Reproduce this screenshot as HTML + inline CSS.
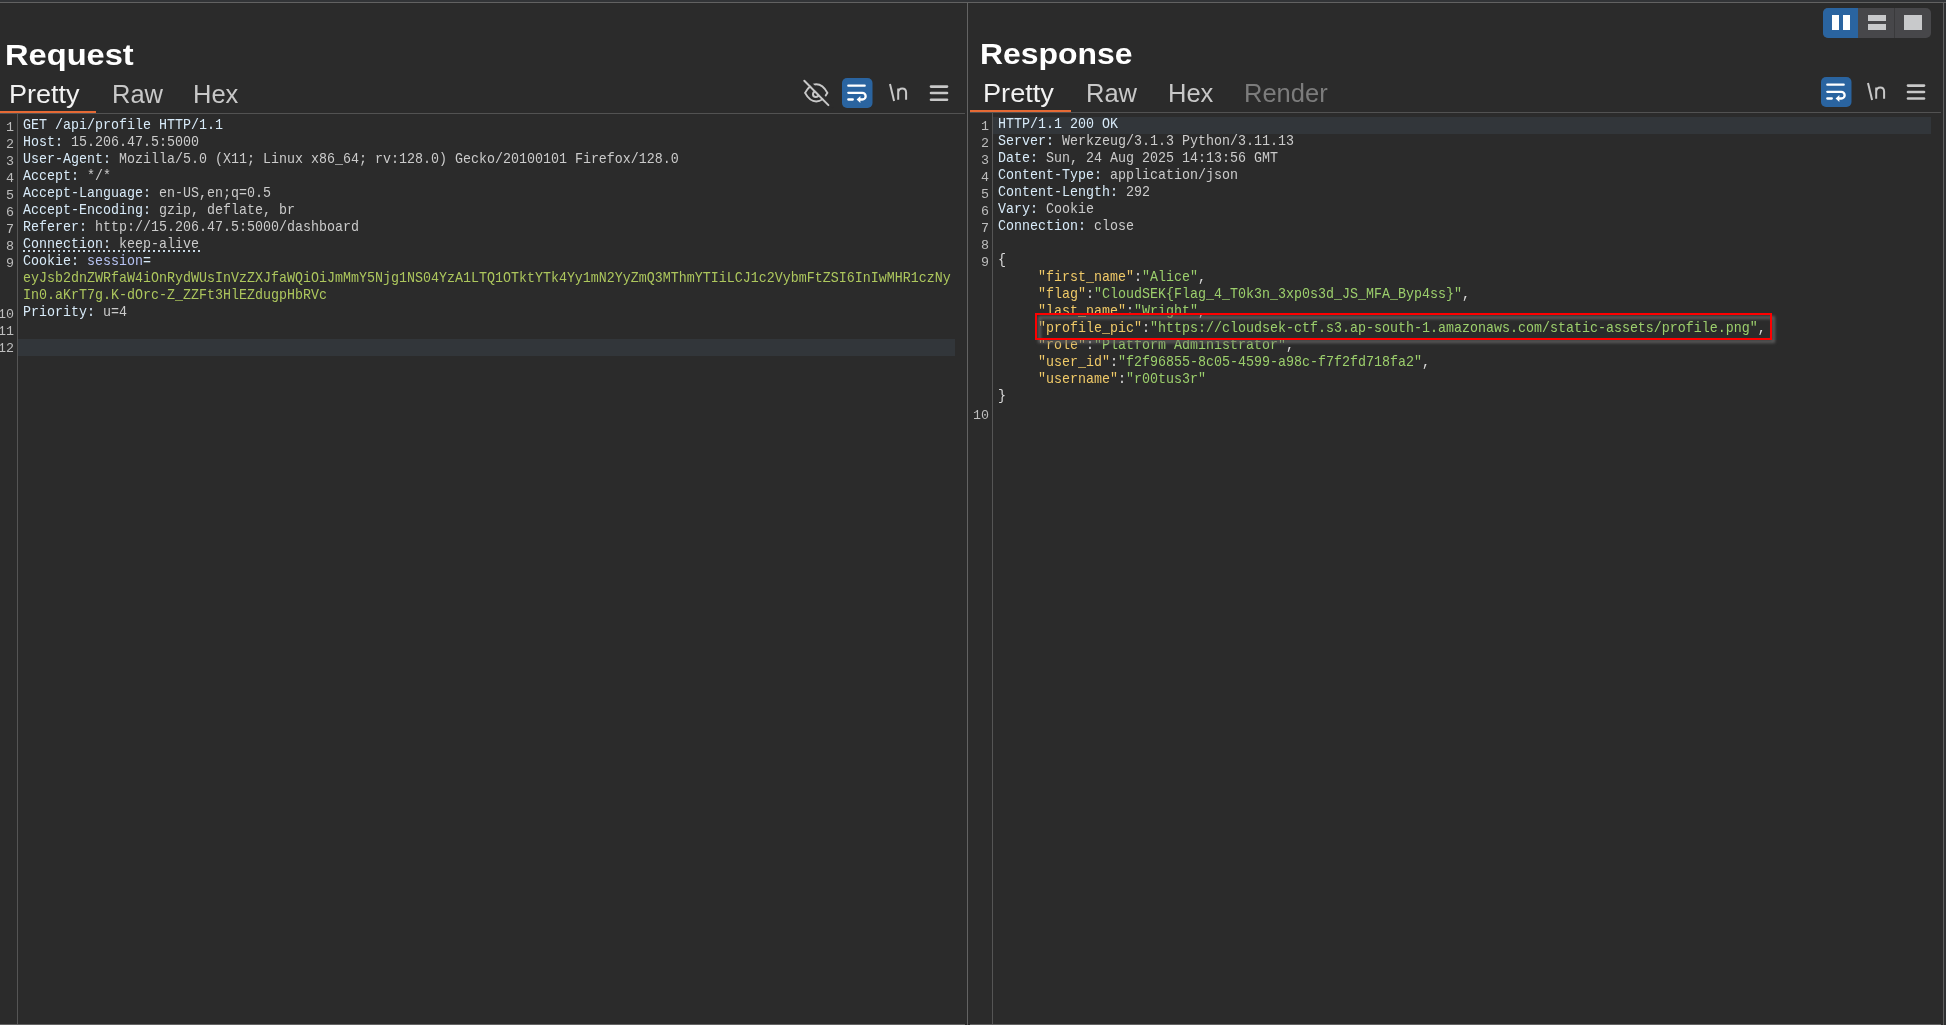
<!DOCTYPE html>
<html><head><meta charset="utf-8">
<style>
html,body{margin:0;padding:0;}
body{width:1946px;height:1025px;overflow:hidden;background:#2b2b2b;position:relative;font-family:"Liberation Sans",sans-serif;}
.a{position:absolute;}
.hl{position:absolute;background:#636363;}
.h1{position:absolute;will-change:transform;font-family:"Liberation Sans",sans-serif;font-weight:bold;font-size:29px;line-height:34px;color:#fff;white-space:pre;transform-origin:0 0;}
.tab{position:absolute;will-change:transform;font-family:"Liberation Sans",sans-serif;font-size:25.5px;line-height:30px;color:#c8c8c8;white-space:pre;}
.code{position:absolute;will-change:transform;transform:scaleY(1.08);transform-origin:0 12px;font-family:"Liberation Mono",monospace;font-size:13.333px;line-height:17px;white-space:pre;color:#c4beb6;}
.ln{position:absolute;will-change:transform;font-family:"Liberation Mono",monospace;font-size:13.333px;line-height:17px;white-space:pre;color:#bdbdbd;text-align:right;}
.n{color:#d8ebf9;}
.v{color:#cbcbcb;}
.ck{color:#b6c2f2;}
.cv{color:#adc75d;}
.k{color:#f0ca68;}
.s{color:#9ccf6c;}
.p{color:#dcdcdc;}
</style></head>
<body>
<!-- right edge strip -->
<div class="a" style="left:1944px;top:0;width:2px;height:1025px;background:#2f3032"></div>
<div class="hl" style="left:1943px;top:2px;width:1px;height:1023px;background:#5e5e5e"></div>
<!-- top strip -->
<div class="a" style="left:0;top:0;width:1946px;height:2px;background:#323437"></div>
<div class="hl" style="left:0;top:2px;width:1946px;height:1px;background:#626262"></div>
<!-- divider -->
<div class="hl" style="left:967px;top:2px;width:1px;height:1023px"></div>
<!-- bottom lines -->
<div class="hl" style="left:0;top:1024px;width:965px;height:1px"></div>
<div class="hl" style="left:970px;top:1024px;width:971px;height:1px"></div>

<!-- layout toggle -->
<div class="a" style="left:1823px;top:8px;width:108px;height:30px;border-radius:5px;background:#47474a;overflow:hidden">
  <div class="a" style="left:0;top:0;width:35px;height:30px;background:#2a64a0"></div>
  <div class="a" style="left:71px;top:0;width:1px;height:30px;background:#3a3a3c"></div>
  <div class="a" style="left:9px;top:7px;width:7px;height:15px;background:#fff"></div>
  <div class="a" style="left:20px;top:7px;width:7px;height:15px;background:#fff"></div>
  <div class="a" style="left:45px;top:7px;width:18px;height:6px;background:#c8c9cb"></div>
  <div class="a" style="left:45px;top:16px;width:18px;height:6px;background:#c8c9cb"></div>
  <div class="a" style="left:81px;top:7px;width:18px;height:15px;background:#c8c9cb"></div>
</div>

<!-- ================= REQUEST ================= -->
<div class="h1" style="left:4.8px;top:38px;transform:scaleX(1.125)">Request</div>
<div class="tab" style="left:8.8px;top:79px;color:#f2f2f2;transform:scaleX(1.06);transform-origin:0 0">Pretty</div>
<div class="tab" style="left:112px;top:79px">Raw</div>
<div class="tab" style="left:193px;top:79px">Hex</div>
<div class="a" style="left:0;top:111px;width:96px;height:2px;background:#e66a35"></div>
<div class="hl" style="left:0;top:113px;width:965px;height:1px;background:#525252"></div>

<!-- icons request -->
<svg class="a" style="left:798px;top:74px" width="40" height="38" viewBox="0 0 40 38">
  <g fill="none" stroke="#c8c8c8" stroke-width="2" stroke-linecap="round">
    <path d="M7.1 18.9 C10 13.5 13.5 10.3 18.25 10.3 C23 10.3 26.5 13.5 29.4 18.9 C26.5 24.3 23 27.5 18.25 27.5 C13.5 27.5 10 24.3 7.1 18.9 Z"/>
    <circle cx="17.8" cy="20.3" r="2.8"/>
  </g>
  <line x1="2" y1="2.4" x2="34" y2="34.8" transform="translate(1.75,-1.75)" stroke="#2b2b2b" stroke-width="3.3"/>
  <line x1="6.3" y1="6.7" x2="30.4" y2="31.1" stroke="#c8c8c8" stroke-width="2" stroke-linecap="round"/>
</svg>
<svg class="a" style="left:842px;top:78px" width="31" height="30" viewBox="0 0 31 30">
  <g>
   <rect x="0" y="0" width="30.5" height="30" rx="5" fill="#2a64a0"/>
   <g fill="none" stroke="#fff" stroke-width="2.3" stroke-linecap="round">
    <line x1="6.3" y1="7.7" x2="22.7" y2="7.7"/>
    <path d="M6.3 14.8 H20.3 A3.35 3.35 0 0 1 20.3 21.5 H17.5"/>
    <line x1="6.3" y1="21.5" x2="10.8" y2="21.5"/>
   </g>
   <path d="M14.6 21.5 L18.4 18 L18.4 25 Z" fill="#fff"/>
  </g>
</svg>
<svg class="a" style="left:886px;top:80px" width="24" height="24" viewBox="0 0 24 24"><g fill="none" stroke="#c8c8c8" stroke-width="2" stroke-linecap="butt">
   <line x1="4.0" y1="4.1" x2="8.1" y2="21"/>
   <path d="M12.2 19.8 V8.4 M12.2 12.3 C12.6 9.6 14.2 8.4 16.2 8.4 C18.8 8.4 20.1 9.8 20.1 12.6 V19.8"/>
  </g></svg>
<svg class="a" style="left:929px;top:83px" width="22" height="20">
  <g stroke="#c8c8c8" stroke-width="2.6" stroke-linecap="round">
    <line x1="2" y1="3.6" x2="18" y2="3.6"/>
    <line x1="2" y1="10" x2="18" y2="10"/>
    <line x1="2" y1="16.7" x2="18" y2="16.7"/>
  </g>
</svg>

<!-- request editor -->
<div class="hl" style="left:17px;top:114px;width:1px;height:910px;background:#555"></div>
<div class="a" style="left:18px;top:339px;width:937px;height:17px;background:#32363a"></div>
<div class="ln" style="right:1932px;top:119px">1</div>
<div class="code" style="left:22.5px;top:117px"><span class="n">GET /api/profile HTTP/1.1</span></div>
<div class="ln" style="right:1932px;top:136px">2</div>
<div class="code" style="left:22.5px;top:134px"><span class="n">Host:</span><span class="v"> 15.206.47.5:5000</span></div>
<div class="ln" style="right:1932px;top:153px">3</div>
<div class="code" style="left:22.5px;top:151px"><span class="n">User-Agent:</span><span class="v"> Mozilla/5.0 (X11; Linux x86_64; rv:128.0) Gecko/20100101 Firefox/128.0</span></div>
<div class="ln" style="right:1932px;top:170px">4</div>
<div class="code" style="left:22.5px;top:168px"><span class="n">Accept:</span><span class="v"> */*</span></div>
<div class="ln" style="right:1932px;top:187px">5</div>
<div class="code" style="left:22.5px;top:185px"><span class="n">Accept-Language:</span><span class="v"> en-US,en;q=0.5</span></div>
<div class="ln" style="right:1932px;top:204px">6</div>
<div class="code" style="left:22.5px;top:202px"><span class="n">Accept-Encoding:</span><span class="v"> gzip, deflate, br</span></div>
<div class="ln" style="right:1932px;top:221px">7</div>
<div class="code" style="left:22.5px;top:219px"><span class="n">Referer:</span><span class="v"> http://15.206.47.5:5000/dashboard</span></div>
<div class="ln" style="right:1932px;top:238px">8</div>
<div class="code" style="left:22.5px;top:236px"><span class="n">Connection:</span><span class="v"> keep-alive</span></div>
<div class="ln" style="right:1932px;top:255px">9</div>
<div class="code" style="left:22.5px;top:253px"><span class="n">Cookie:</span><span class="v"> </span><span class="ck">session</span><span class="n">=</span></div>
<div class="code" style="left:22.5px;top:270px"><span class="cv">eyJsb2dnZWRfaW4iOnRydWUsInVzZXJfaWQiOiJmMmY5Njg1NS04YzA1LTQ1OTktYTk4Yy1mN2YyZmQ3MThmYTIiLCJ1c2VybmFtZSI6InIwMHR1czNy</span></div>
<div class="code" style="left:22.5px;top:287px"><span class="cv">In0.aKrT7g.K-dOrc-Z_ZZFt3HlEZdugpHbRVc</span></div>
<div class="ln" style="right:1932px;top:306px">10</div>
<div class="code" style="left:22.5px;top:304px"><span class="n">Priority:</span><span class="v"> u=4</span></div>
<div class="ln" style="right:1932px;top:323px">11</div>
<div class="ln" style="right:1932px;top:340px">12</div>
<div class="a" style="left:23px;top:250px;width:177px;height:2px;background:repeating-linear-gradient(90deg,#c9d9e6 0,#c9d9e6 2px,transparent 2px,transparent 5px)"></div>


<!-- ================= RESPONSE ================= -->
<div class="h1" style="left:979.8px;top:37px;transform:scaleX(1.1)">Response</div>
<div class="tab" style="left:983px;top:78px;color:#f2f2f2;transform:scaleX(1.065);transform-origin:0 0">Pretty</div>
<div class="tab" style="left:1086px;top:78px">Raw</div>
<div class="tab" style="left:1168px;top:78px">Hex</div>
<div class="tab" style="left:1244px;top:78px;color:#7c7c7c">Render</div>
<div class="a" style="left:970px;top:110px;width:101px;height:2px;background:#e66a35"></div>
<div class="hl" style="left:970px;top:112px;width:971px;height:1px;background:#525252"></div>


<!-- icons response -->
<svg class="a" style="left:1821px;top:77px" width="31" height="30" viewBox="0 0 31 30"><g>
   <rect x="0" y="0" width="30.5" height="30" rx="5" fill="#2a64a0"/>
   <g fill="none" stroke="#fff" stroke-width="2.3" stroke-linecap="round">
    <line x1="6.3" y1="7.7" x2="22.7" y2="7.7"/>
    <path d="M6.3 14.8 H20.3 A3.35 3.35 0 0 1 20.3 21.5 H17.5"/>
    <line x1="6.3" y1="21.5" x2="10.8" y2="21.5"/>
   </g>
   <path d="M14.6 21.5 L18.4 18 L18.4 25 Z" fill="#fff"/>
  </g></svg>
<svg class="a" style="left:1864px;top:79px" width="24" height="24" viewBox="0 0 24 24"><g fill="none" stroke="#c8c8c8" stroke-width="2" stroke-linecap="butt">
   <line x1="4.0" y1="4.1" x2="8.1" y2="21"/>
   <path d="M12.2 19.8 V8.4 M12.2 12.3 C12.6 9.6 14.2 8.4 16.2 8.4 C18.8 8.4 20.1 9.8 20.1 12.6 V19.8"/>
  </g></svg>
<svg class="a" style="left:1906px;top:82px" width="22" height="20">
  <g stroke="#c8c8c8" stroke-width="2.6" stroke-linecap="round">
    <line x1="2" y1="3.6" x2="18" y2="3.6"/>
    <line x1="2" y1="10" x2="18" y2="10"/>
    <line x1="2" y1="16.5" x2="18" y2="16.5"/>
  </g>
</svg>

<!-- response editor -->
<div class="hl" style="left:992px;top:113px;width:1px;height:911px;background:#555"></div>
<div class="a" style="left:993px;top:117px;width:938px;height:17px;background:#32363a"></div>
<div class="ln" style="right:957px;top:118px">1</div>
<div class="code" style="left:997.5px;top:116px"><span class="n">HTTP/1.1 200 OK</span></div>
<div class="ln" style="right:957px;top:135px">2</div>
<div class="code" style="left:997.5px;top:133px"><span class="n">Server:</span><span class="v"> Werkzeug/3.1.3 Python/3.11.13</span></div>
<div class="ln" style="right:957px;top:152px">3</div>
<div class="code" style="left:997.5px;top:150px"><span class="n">Date:</span><span class="v"> Sun, 24 Aug 2025 14:13:56 GMT</span></div>
<div class="ln" style="right:957px;top:169px">4</div>
<div class="code" style="left:997.5px;top:167px"><span class="n">Content-Type:</span><span class="v"> application/json</span></div>
<div class="ln" style="right:957px;top:186px">5</div>
<div class="code" style="left:997.5px;top:184px"><span class="n">Content-Length:</span><span class="v"> 292</span></div>
<div class="ln" style="right:957px;top:203px">6</div>
<div class="code" style="left:997.5px;top:201px"><span class="n">Vary:</span><span class="v"> Cookie</span></div>
<div class="ln" style="right:957px;top:220px">7</div>
<div class="code" style="left:997.5px;top:218px"><span class="n">Connection:</span><span class="v"> close</span></div>
<div class="ln" style="right:957px;top:237px">8</div>
<div class="ln" style="right:957px;top:254px">9</div>
<div class="code" style="left:997.5px;top:252px"><span class="p">{</span></div>
<div class="code" style="left:997.5px;top:269px"><span class="p">     </span><span class="k">"first_name"</span><span class="p">:</span><span class="s">"Alice"</span><span class="p">,</span></div>
<div class="code" style="left:997.5px;top:286px"><span class="p">     </span><span class="k">"flag"</span><span class="p">:</span><span class="s">"CloudSEK{Flag_4_T0k3n_3xp0s3d_JS_MFA_Byp4ss}"</span><span class="p">,</span></div>
<div class="code" style="left:997.5px;top:303px"><span class="p">     </span><span class="k">"last_name"</span><span class="p">:</span><span class="s">"Wright"</span><span class="p">,</span></div>
<div class="code" style="left:997.5px;top:320px"><span class="p">     </span><span class="k">"profile_pic"</span><span class="p">:</span><span class="s">"https://cloudsek-ctf.s3.ap-south-1.amazonaws.com/static-assets/profile.png"</span><span class="p">,</span></div>
<div class="code" style="left:997.5px;top:337px"><span class="p">     </span><span class="k">"role"</span><span class="p">:</span><span class="s">"Platform Administrator"</span><span class="p">,</span></div>
<div class="code" style="left:997.5px;top:354px"><span class="p">     </span><span class="k">"user_id"</span><span class="p">:</span><span class="s">"f2f96855-8c05-4599-a98c-f7f2fd718fa2"</span><span class="p">,</span></div>
<div class="code" style="left:997.5px;top:371px"><span class="p">     </span><span class="k">"username"</span><span class="p">:</span><span class="s">"r00tus3r"</span></div>
<div class="code" style="left:997.5px;top:388px"><span class="p">}</span></div>
<div class="ln" style="right:957px;top:407px">10</div>

<!-- red annotation box -->
<div class="a" style="left:1038px;top:316px;width:731px;height:21px;border:3px solid rgba(110,110,110,0.75);filter:blur(1.5px)"></div>
<div class="a" style="left:1035px;top:313px;width:733px;height:23px;border:2px solid #f00"></div>
</body></html>
